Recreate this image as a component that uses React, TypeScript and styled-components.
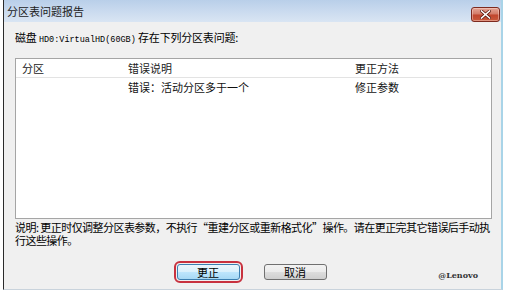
import React from 'react'
import styled, { createGlobalStyle } from 'styled-components'

const cjk = `"Noto Sans CJK SC", "Noto Sans", sans-serif`

const GlobalStyle = createGlobalStyle`
    html, body {
        margin: 0;
        padding: 0;
        background: #ffffff;
    }
    body {
        font-family: ${cjk};
    }
`

interface Issue {
    partition: string
    error: string
    fix: string
}

const issues: Issue[] = [
    { partition: '', error: '错误：活动分区多于一个', fix: '修正参数' },
]

const App: React.FC = () => {
    return (
        <>
            <GlobalStyle />
            <Page>
                <Window>
                    <TitleBar>
                        <Title>分区表问题报告</Title>
                        <CloseButton aria-label="close">
                            <svg width="11" height="9" viewBox="0 0 11 9">
                                <path d="M1.5 1 L9.5 8 M9.5 1 L1.5 8" stroke="#5a1a10" strokeWidth="3" strokeLinecap="square" />
                                <path d="M1.5 1 L9.5 8 M9.5 1 L1.5 8" stroke="#ffffff" strokeWidth="1.6" strokeLinecap="square" />
                            </svg>
                        </CloseButton>
                    </TitleBar>
                    <Body>
                        <Label>
                            磁盘 <Mono>HD0:VirtualHD(60GB)</Mono> 存在下列分区表问题:
                        </Label>
                        <ListBox>
                            <HeaderRow>
                                <Cell>分区</Cell>
                                <Cell>错误说明</Cell>
                                <Cell>更正方法</Cell>
                            </HeaderRow>
                            {issues.map((issue, i) => (
                                <Row key={i}>
                                    <Cell>{issue.partition}</Cell>
                                    <Cell>{issue.error}</Cell>
                                    <Cell>{issue.fix}</Cell>
                                </Row>
                            ))}
                        </ListBox>
                        <Note>
                            <NoteLine>说明: 更正时仅调整分区表参数，不执行“重建分区或重新格式化”操作。请在更正完其它错误后手动执</NoteLine>
                            <NoteLine>行这些操作。</NoteLine>
                        </Note>
                        <ButtonRow>
                            <Button primary>更正</Button>
                            <Button>取消</Button>
                        </ButtonRow>
                    </Body>
                    <Watermark>@Lenovo</Watermark>
                </Window>
            </Page>
        </>
    )
}

const Page = styled.div`
    width: 510px;
    height: 298px;
    padding-left: 3px;
    box-sizing: border-box;
`

const Window = styled.div`
    position: relative;
    width: 500px;
    height: 290px;
    box-sizing: border-box;
    display: flex;
    flex-direction: column;
    background: #f0f0f0;
    border-left: 1px solid #2b2b2b;
    border-right: 2px solid #a9d4e8;
    border-bottom: 1px solid #c9d3dc;
`

const TitleBar = styled.div`
    height: 22px;
    flex: none;
    display: flex;
    align-items: flex-start;
    justify-content: space-between;
    padding: 0 1px 0 3px;
    background: linear-gradient(to bottom, #b9cfe9 0%, #c8d9ee 45%, #d9e5f3 100%);
`

const Title = styled.span`
    font-size: 11px;
    line-height: 22px;
    color: #1b1b1b;
`

const CloseButton = styled.div`
    width: 27px;
    height: 13px;
    margin-top: 7px;
    display: flex;
    align-items: center;
    justify-content: center;
    border: 1px solid #7d2a1e;
    border-radius: 3px;
    background: linear-gradient(to bottom, #e5a596 0%, #d27a66 48%, #c0452d 52%, #c95a3c 100%);
    box-shadow: inset 0 0 0 1px rgba(255, 220, 210, 0.45);
`

const Body = styled.div`
    flex: 1;
    display: flex;
    flex-direction: column;
    padding: 8px 9px 9px 11px;
`

const Label = styled.div`
    font-size: 11px;
    line-height: 14px;
    color: #000;
    white-space: nowrap;
    letter-spacing: -0.2px;
`

const Mono = styled.span`
    font-family: "Liberation Mono", monospace;
    font-size: 8.5px;
    letter-spacing: 0;
`

const ListBox = styled.div`
    margin-top: 11px;
    height: 161px;
    box-sizing: border-box;
    background: #ffffff;
    border: 1px solid #a5a5a5;
`

const HeaderRow = styled.div`
    display: grid;
    grid-template-columns: 106px 227px 1fr;
    height: 18px;
    align-items: center;
    padding-left: 6px;
    border-bottom: 1px solid #e3e3e3;
    font-size: 11px;
    color: #222;
`

const Row = styled.div`
    display: grid;
    grid-template-columns: 106px 227px 1fr;
    height: 17px;
    align-items: center;
    padding-left: 6px;
    font-size: 11px;
    color: #111;
`

const Cell = styled.span`
    white-space: nowrap;
`

const Note = styled.div`
    margin-top: 2px;
    display: flex;
    flex-direction: column;
    font-size: 11px;
    line-height: 13px;
    color: #000;
`

const NoteLine = styled.span`
    white-space: nowrap;
    letter-spacing: -0.55px;
    height: 13px;
`

const ButtonRow = styled.div`
    margin-top: auto;
    display: flex;
    justify-content: center;
    gap: 24px;
    padding-right: 4px;
`

const Button = styled.button<{ primary?: boolean }>`
    width: 63px;
    height: 16px;
    padding: 0;
    font-family: ${cjk};
    font-size: 11px;
    line-height: 14px;
    color: #000;
    border-radius: 3px;
    border: 1px solid ${p => (p.primary ? '#3c7fb1' : '#707070')};
    background: ${p =>
        p.primary
            ? 'linear-gradient(to bottom, #eaf6fd 0%, #d9f0fc 50%, #bee6fd 51%, #a7d9f5 100%)'
            : 'linear-gradient(to bottom, #f2f2f2 0%, #ebebeb 50%, #dddddd 51%, #cfcfcf 100%)'};
    outline: ${p => (p.primary ? '2px solid #c8323f' : 'none')};
    outline-offset: 1px;
`

const Watermark = styled.div`
    position: absolute;
    right: 23px;
    bottom: 9px;
    font-family: "DejaVu Serif", serif;
    font-size: 8px;
    font-weight: bold;
    color: #333;
`

export default App
